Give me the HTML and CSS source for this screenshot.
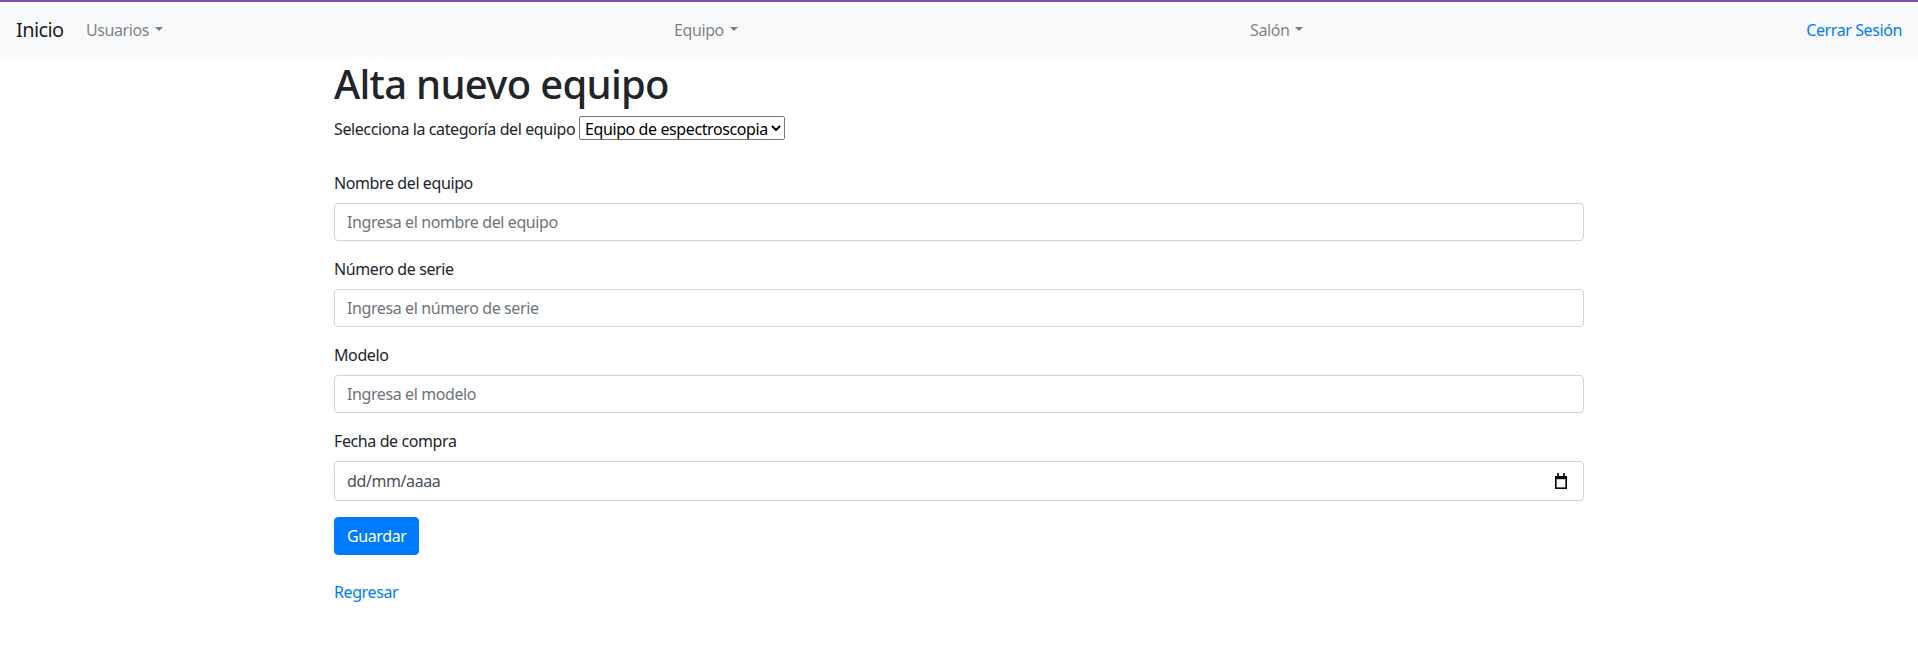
FILE: index.html
```html
<!DOCTYPE html>
<html lang="es">
<head>
<meta charset="utf-8">
<title>Alta nuevo equipo</title>
<link rel="stylesheet" href="styles.css">
</head>
<body>
<nav class="navbar">
  <a class="brand" href="#">Inicio</a>
  <a class="nav-link dropdown" href="#">Usuarios</a>
  <a class="nav-link dropdown" href="#">Equipo</a>
  <a class="nav-link dropdown" href="#">Salón</a>
  <a class="nav-link logout" href="#">Cerrar Sesión</a>
</nav>
<main class="container">
  <h1 class="title">Alta nuevo equipo</h1>
  <p class="category">Selecciona la categoría del equipo <select class="category-select"><option>Equipo de espectroscopia</option></select></p>
  <form class="form">
    <div class="form-group">
      <label class="label">Nombre del equipo</label>
      <input class="form-control" type="text" placeholder="Ingresa el nombre del equipo">
    </div>
    <div class="form-group">
      <label class="label">Número de serie</label>
      <input class="form-control" type="text" placeholder="Ingresa el número de serie">
    </div>
    <div class="form-group">
      <label class="label">Modelo</label>
      <input class="form-control" type="text" placeholder="Ingresa el modelo">
    </div>
    <div class="form-group">
      <label class="label">Fecha de compra</label>
      <div class="form-control date-control">
        <span class="date-text">dd/mm/aaaa</span>
        <svg class="cal-icon" width="12" height="16" viewBox="0 0 12 16" aria-hidden="true">
          <rect x="2.2" y="0" width="1.6" height="3.5" fill="#000"/>
          <rect x="8.2" y="0" width="1.6" height="3.5" fill="#000"/>
          <rect x="0" y="3" width="12" height="3.2" fill="#000"/>
          <rect x="0.8" y="3.8" width="10.4" height="11.4" fill="none" stroke="#000" stroke-width="1.6"/>
        </svg>
      </div>
    </div>
    <button class="btn" type="button">Guardar</button>
  </form>
  <a class="back-link" href="#">Regresar</a>
</main>
</body>
</html>
```
FILE: styles.css
```css
* { box-sizing: border-box; }
html, body { margin: 0; padding: 0; }
body {
  font-family: "Noto Sans", "Open Sans", sans-serif;
  font-size: 16px;
  line-height: 1.5;
  letter-spacing: -0.4px;
  color: #212529;
  background: #fff;
}
a { text-decoration: none; }

.navbar {
  border-top: 2px solid #7952b3;
  background: #f8f9fa;
  height: 57px;
  padding: 0 16px;
  display: grid;
  grid-template-columns: 62px 588px 576px 1fr auto;
  align-items: center;
}
.brand {
  font-size: 20px;
  line-height: 30px;
  letter-spacing: -0.6px;
  color: rgba(0,0,0,.9);
}
.nav-link {
  justify-self: start;
  padding: 8px;
  line-height: 24px;
  color: rgba(0,0,0,.5);
}
.dropdown::after {
  content: "";
  display: inline-block;
  margin-left: 6px;
  vertical-align: .255em;
  border-top: .3em solid;
  border-right: .3em solid transparent;
  border-left: .3em solid transparent;
  border-bottom: 0;
}
.logout {
  color: #007bff;
  padding-right: 0;
}

.container {
  width: 1250px;
  margin: 0 auto;
}
.title {
  margin: 3px 0 8px;
  font-size: 40px;
  font-weight: 500;
  line-height: 1.2;
  letter-spacing: -0.7px;
}
.category { margin: 0; line-height: 24px; }
.category-select {
  font-family: inherit;
  font-size: 16px;
  letter-spacing: -0.4px;
  height: 24px;
  line-height: 22px;
  padding: 0 0 0 1px;
  color: #000;
  background: #fff;
  border: 1px solid #767676;
  border-radius: 2px;
  vertical-align: baseline;
}
.form { margin-top: 30px; }
.form-group { margin-bottom: 16px; }
.label {
  display: inline-block;
  margin-bottom: 8px;
}
.form-control {
  display: block;
  width: 100%;
  height: 38px;
  padding: 6px 12px;
  font-family: inherit;
  font-size: 16px;
  letter-spacing: -0.4px;
  line-height: 24px;
  color: #495057;
  background: #fff;
  border: 1px solid #ced4da;
  border-radius: 4px;
}
.form-control::placeholder { color: #6c757d; opacity: 1; }
.date-control {
  height: 40px;
  display: flex;
  align-items: center;
  justify-content: space-between;
  padding-right: 16px;
}
.cal-icon { display: block; }
.btn {
  display: inline-block;
  height: 38px;
  padding: 6px 12px;
  font-family: inherit;
  font-size: 16px;
  letter-spacing: -0.4px;
  line-height: 24px;
  color: #fff;
  background: #007bff;
  border: 1px solid #007bff;
  border-radius: 4px;
}
.back-link {
  display: inline-block;
  margin-top: 25px;
  color: #007bff;
}
```
